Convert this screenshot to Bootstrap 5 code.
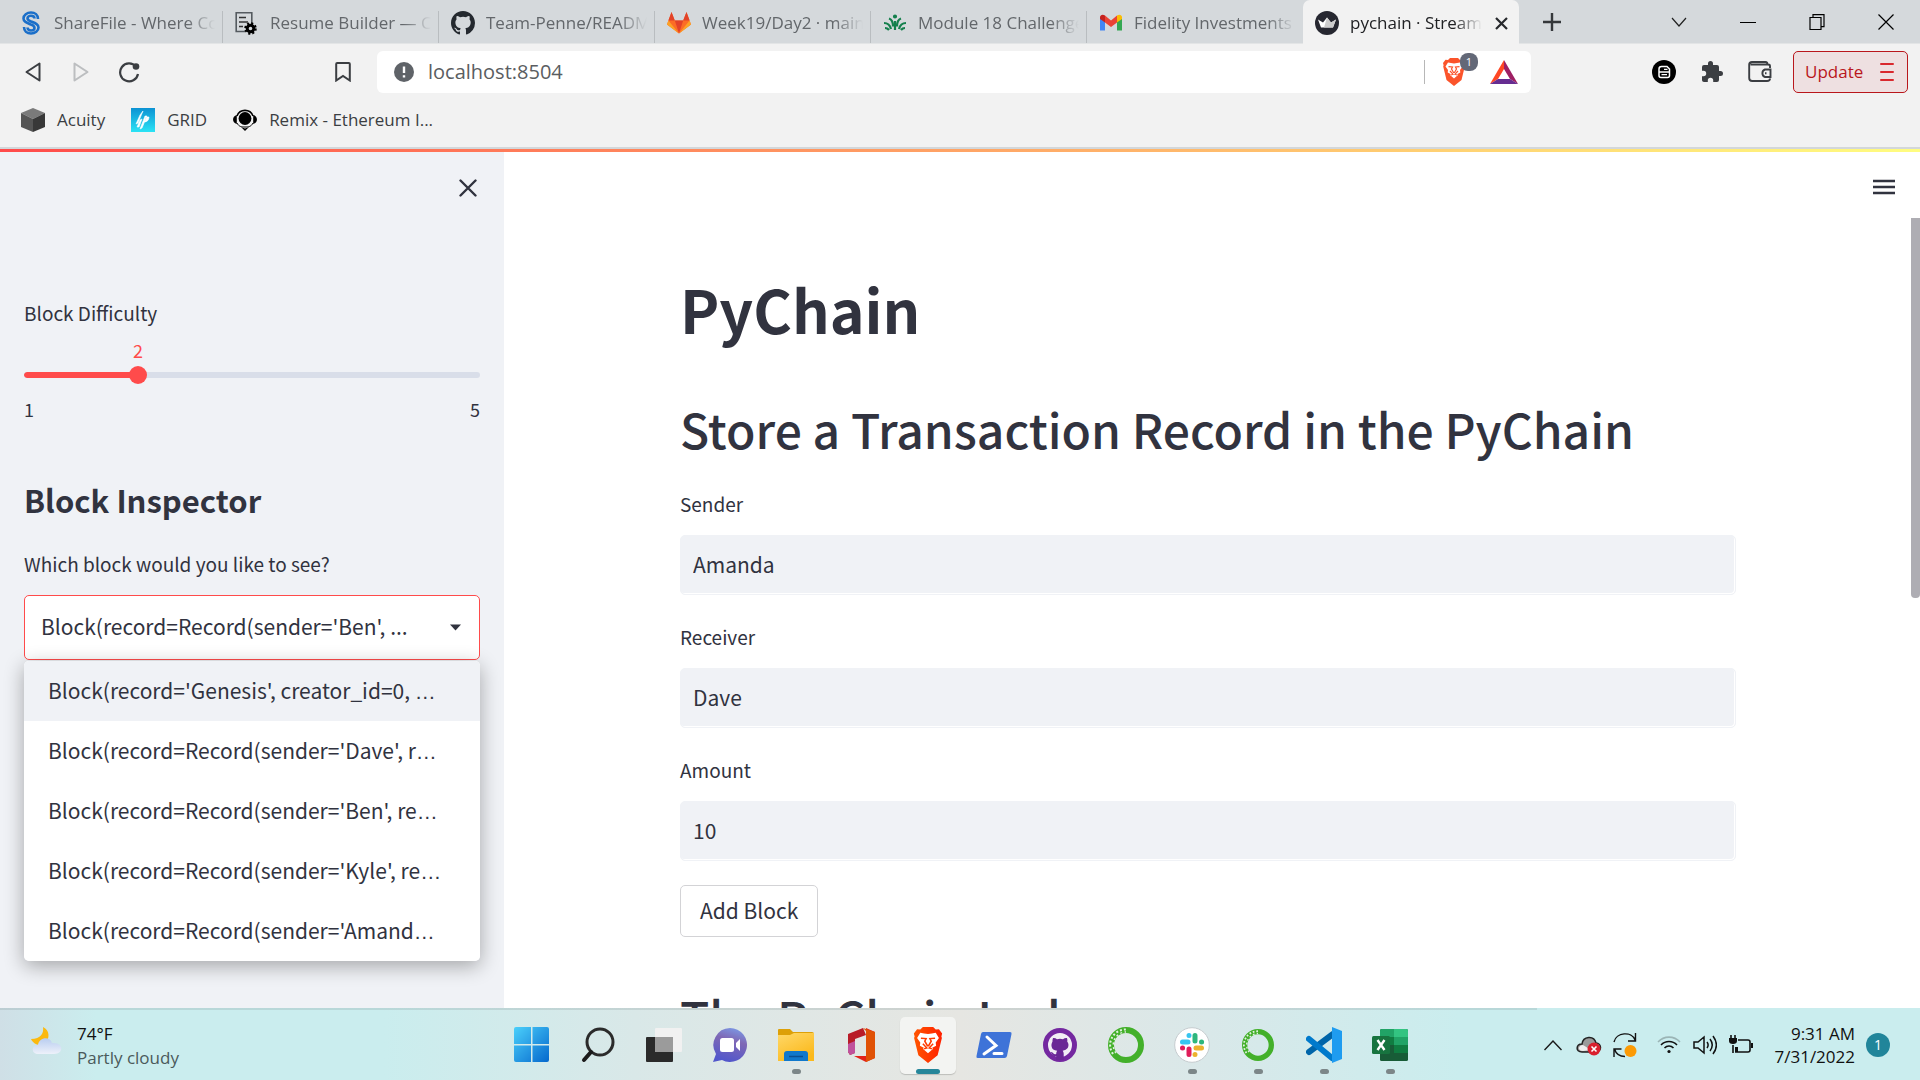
<!DOCTYPE html>
<html lang="en">
<head>
<meta charset="utf-8">
<meta name="viewport" content="width=device-width, initial-scale=1">
<title>pychain · Streamlit</title>
<link href="https://cdn.jsdelivr.net/npm/bootstrap@5.3.0/dist/css/bootstrap.min.css" rel="stylesheet">
<style>
  :root { --ink: #31333f; --panel: #f0f2f6; --accent: #ff4b4b; --chrome: #f2f2f2; --strip: #d5d9dc; }
  body { font-family: "Open Sans", "Noto Sans", sans-serif; font-size: 17px; color: #3b3e42; }
  svg { display: block; flex: none; }
  button { color: inherit; }
  .plain { background: none; border: 0; padding: 0; display: flex; align-items: center; justify-content: center; flex: none; }

  /* tab strip */
  .tabstrip { height: 44px; background: var(--strip); padding-left: 7px; border-bottom: 1px solid #e3e5e6; }
  .tab { width: 216px; height: 43px; padding: 2px 8px 0 12px; gap: 11px; background: linear-gradient(#b9bdc0, #b9bdc0) right bottom / 1px 32px no-repeat; color: #63676b; font-size: 17px; line-height: 24px; text-decoration: none; }
  .tab.before-active { background: none; }
  .tab-on { height: 44px; background: var(--chrome); border-radius: 7px 7px 0 0; color: #202124; }
  .tab-title { overflow: hidden; white-space: nowrap; flex: 1; -webkit-mask-image: linear-gradient(90deg, #000 calc(100% - 28px), transparent); mask-image: linear-gradient(90deg, #000 calc(100% - 28px), transparent); }
  .new-tab { width: 66px; }
  .win-btn { width: 69px; color: #000; }

  /* toolbar and bookmarks */
  .toolbar { background: var(--chrome); height: 56px; padding: 7px 12px 7px 9px; }
  .nav-btn { width: 48px; height: 42px; }
  .mark-btn { width: 68px; margin-left: 156px; }
  .address { flex: 1; background: #fff; border-radius: 6px; height: 42px; padding: 0 13px 0 17px; }
  .address input { border: 0; outline: 0; background: none; font-size: 20px; line-height: 28px; color: #5a5d61; padding: 0; margin-left: 14px; min-width: 0; }
  .address .rule { width: 1px; height: 24px; background: #b7b7b7; margin-right: 17px; }
  .tools { margin-left: 109px; }
  .shield-count { position: absolute; left: 18px; top: -5px; width: 18px; height: 18px; border-radius: 8px; background: #636877; color: #fff; font-size: 11px; line-height: 18px; text-align: center; }
  .update { width: 115px; height: 42px; border: 1px solid #b9171c; border-radius: 5px; background: #eee0e1; color: #b9171c; font-size: 17px; padding: 0 13px 0 11px; margin-left: 9px; }
  .bookmarks { background: var(--chrome); height: 49px; padding: 5px 21px 12px; gap: 26px; border-bottom: 2px solid #d3d7da; font-size: 17px; }
  .bookmarks a { color: #3b3e42; text-decoration: none; gap: 12px; line-height: 24px; }

  /* application */
  .app { min-height: 0; font-family: "Noto Sans CJK SC", "Source Sans Pro", sans-serif; color: var(--ink); background: #fff; font-size: 21px; }
  .ribbon { position: absolute; top: 0; left: 0; right: 0; height: 3px; background: linear-gradient(90deg, #ff4b4b, #fffd80); z-index: 3; }
  .side { width: 504px; background: var(--panel); padding: 26px 24px 0; flex: none; }
  .side-close { width: 24px; height: 26px; color: var(--ink); }
  .field-label { font-size: 19px; line-height: 26px; margin: 0; display: block; }
  .slider-group { margin-top: 99px; }
  .slider-value { color: var(--accent); font-size: 18px; line-height: 26px; margin-top: 11px; }
  .slider-box { position: relative; height: 18px; margin-top: 3px; }
  .rail { height: 6px; background: #d9dee9; border-radius: 3px; width: 100%; }
  .rail .progress-bar { background: var(--accent); border-radius: 3px; }
  .slider-box input { position: absolute; left: -9px; top: 0; width: calc(100% + 18px); height: 18px; }
  .slider-box input::-webkit-slider-runnable-track { background: transparent; height: 18px; }
  .slider-box input::-webkit-slider-thumb { width: 18px; height: 18px; margin-top: 0; background: var(--accent); }
  .slider-ends { margin-top: 12px; font-size: 18px; line-height: 26px; }
  .side h2 { font-size: 31px; line-height: 36px; font-weight: 700; margin: 60px 0 33px; }
  .picker { position: relative; margin-top: 18px; }
  .picker select { width: 100%; height: 65px; border: 1px solid var(--accent); border-radius: 5px; background: #fff; color: var(--ink); font-size: 21px; padding: 0 48px 2px 16px; appearance: none; }
  .picker > svg { position: absolute; right: 19px; top: 29px; }
  .options { position: absolute; left: 0; right: 0; top: 66px; background: #fff; border-radius: 5px; overflow: hidden; z-index: 2; }
  .options-shadow { position: absolute; inset: 66px 0 auto 0; height: 300px; border-radius: 5px; box-shadow: 0 5px 20px rgba(0,0,0,.32); }
  .options button { display: block; width: 100%; height: 60px; border: 0; background: none; text-align: left; padding: 0 12px 2px 24px; color: var(--ink); font-size: 21px; line-height: 30px; white-space: nowrap; }
  .options button.current { background: var(--panel); }
  .dots { font-family: "Liberation Sans", sans-serif; line-height: 1; }

  .main-pane { min-width: 0; overflow: hidden; position: relative; padding: 130px 8px 0 0; }
  .menu-btn { position: absolute; right: 24px; top: 26px; width: 24px; height: 24px; }
  .thumb { position: absolute; right: 0; top: 69px; width: 9px; height: 380px; border-radius: 0 0 4px 4px; background: #aeadb3; }
  .column { max-width: 1056px; margin: 0 auto; }
  .column h1 { font-size: 59px; line-height: 60px; font-weight: 700; margin: 0 0 62px; }
  .column h2 { font-size: 48px; line-height: 54px; font-weight: 500; margin: 0 0 36px; }
  .column h2.ledger { margin: 52px 0 0; }
  .field { margin-bottom: 29px; }
  .field:last-of-type { margin-bottom: 24px; }
  .field input { width: 100%; height: 60px; margin-top: 18px; border: 1px solid var(--panel); border-radius: 5px; background: var(--panel); box-shadow: inset -1px -1px #fff; color: var(--ink); font-size: 21px; padding: 0 12px 3px; display: block; }
  .add-btn { height: 52px; border: 1px solid #d3d3d6; border-radius: 5px; background: #fff; color: var(--ink); font-size: 21px; line-height: 30px; padding: 0 19px 3px; display: block; }

  /* taskbar */
  .taskbar { height: 72px; flex: none; border-top: 2px solid; border-image: linear-gradient(90deg, rgba(120,140,140,.22) 80%, transparent 80%) 1; font-size: 17px; color: #111; background: linear-gradient(90deg, #cfdfe6 0, #caedee 5%, #caedee 20%, #d9e8e8 33%, #e6e6e2 50%, #d9e8e9 63%, #caedee 76%, #caedee 100%); }
  .launcher { padding-left: 2px; }
  .wing { flex: 1 1 0; }
  .weather { padding: 12px 0 0 29px; gap: 14px; line-height: 24px; }
  .weather .sub { color: #4a5a5b; }
  .weather svg { margin-top: 5px; }
  .slot { width: 66px; height: 70px; position: relative; }
  .slot .tile { width: 56px; height: 57px; border-radius: 5px; }
  .slot.active .tile { background: #f3f4f2; box-shadow: 0 1px 1px rgba(0,0,0,.18); }
  .slot.open::after { content: ""; position: absolute; left: 29px; bottom: 6px; width: 9px; height: 5px; border-radius: 3px; background: #7c8688; }
  .slot.active::after { content: ""; position: absolute; left: 21px; bottom: 6px; width: 24px; height: 5px; border-radius: 3px; background: #26869a; }
  .tray { padding-right: 30px; }
  .clock { width: 84px; line-height: 23px; text-align: right; margin: 0 11px 0 12px; white-space: nowrap; }
  .notice { width: 24px; height: 24px; border-radius: 12px; background: #21859a; color: #fff; font-size: 14px; line-height: 24px; text-align: center; }
  .tray-btn { width: 36px; height: 40px; }
</style>
<script src="https://cdn.jsdelivr.net/npm/bootstrap@5.3.0/dist/js/bootstrap.bundle.min.js"></script>
</head>
<body class="vh-100 d-flex flex-column overflow-hidden">

<header class="flex-shrink-0">
  <nav class="tabstrip d-flex" aria-label="Browser tabs">
    <a class="tab d-flex align-items-center" href="#">
      <svg width="24" height="24" viewBox="0 0 24 24"><path d="M19 8c0-4-3-6.500-7-6.500S4.500 4 4.500 7.500 8 12 12 13.500c3 1 3.500 2 3.500 3.500s-1.500 2.500-3.500 2.500-3.500-1-3.500-3M5 16c0 4 3 6.500 7 6.500s7.500-2.500 7.500-6S16 12 12 10.500c-3-1-3.500-2-3.500-3.200S10 4.700 12 4.700s3.500 1 3.500 2.800" fill="none" stroke="#1b6fc9" stroke-width="2.600"/></svg>
      <span class="tab-title">ShareFile - Where Co</span></a>
    <a class="tab d-flex align-items-center" href="#">
      <svg width="24" height="24" viewBox="0 0 24 24"><path d="M10 20.500H1.200V1.800h15.600V12" fill="none" stroke="#555b60" stroke-width="1.600"/><path d="M4 6.500h7M4 11h9M4 15.500h4" stroke="#333" stroke-width="1.600"/><circle cx="15.500" cy="17.500" r="3.300" fill="none" stroke="#000" stroke-width="3"/><circle cx="15.500" cy="17.500" r="5" fill="none" stroke="#000" stroke-width="2.500" stroke-dasharray="2 1.930"/></svg>
      <span class="tab-title">Resume Builder — Co</span></a>
    <a class="tab d-flex align-items-center" href="#">
      <svg width="24" height="24" viewBox="0 0 16 16"><path fill="#24292f" d="M8 0C3.580 0 0 3.580 0 8c0 3.540 2.290 6.530 5.470 7.590.4.070.55-.17.55-.38 0-.19-.01-.82-.01-1.490-2.010.37-2.530-.49-2.690-.94-.09-.23-.48-.94-.82-1.130-.28-.15-.68-.52-.01-.53.63-.01 1.080.58 1.230.82.72 1.210 1.870.87 2.330.66.070-.52.28-.87.51-1.070-1.780-.2-3.640-.89-3.640-3.950 0-.87.31-1.590.82-2.150-.08-.2-.36-1.020.08-2.120 0 0 .67-.21 2.200.82a7.600 7.600 0 0 1 4 0c1.530-1.040 2.200-.82 2.200-.82.44 1.100.16 1.920.08 2.120.51.56.82 1.270.82 2.150 0 3.070-1.870 3.750-3.650 3.950.29.25.54.73.54 1.480 0 1.070-.01 1.930-.01 2.200 0 .21.15.46.55.38A8 8 0 0 0 16 8c0-4.420-3.580-8-8-8z"/></svg>
      <span class="tab-title">Team-Penne/README</span></a>
    <a class="tab d-flex align-items-center" href="#">
      <svg width="24" height="24" viewBox="0 0 24 24"><path d="M0 13.500 4.500 1l3.300 8.500h8.400L19.500 1 24 13.500 12 22.500z" fill="#fc6d26"/><path d="M4.500 1 7.800 9.500H1.400zM19.500 1l3.100 8.500h-6.400zM7.800 9.500h8.400L12 22.500z" fill="#e24329"/><path d="M1.400 9.500 0 13.500l12 9zM22.600 9.500l1.400 4-12 9z" fill="#fca326"/></svg>
      <span class="tab-title">Week19/Day2 · main</span></a>
    <a class="tab d-flex align-items-center" href="#">
      <svg width="24" height="24" viewBox="0 0 24 24" fill="none" stroke="#15804d" stroke-width="2.200"><circle cx="12" cy="5.500" r="1" /><path d="M12 10v9M6 7.500c3 1 4 3.500 4 8M18 7.500c-3 1-4 3.500-4 8M1 12c4 0 6 2 7 6M23 12c-4 0-6 2-7 6M2 17c2 0 3 .7 4 2M22 17c-2 0-3 .7-4 2"/></svg>
      <span class="tab-title">Module 18 Challenge</span></a>
    <a class="tab before-active d-flex align-items-center" href="#">
      <svg width="24" height="24" viewBox="0 0 24 24"><path d="M1 6v13.500h5V10z" fill="#4285f4"/><path d="M18 10v9.500h5V6z" fill="#34a853"/><path d="M1 6.500c0-3 3-3.500 5-2v7L1 8z" fill="#c5221f"/><path d="M6 4.500 12 9.500l6-5v7L12 16l-6-4.500z" fill="#ea4335"/><path d="M23 6.500c0-3-3-3.500-5-2v7L23 8z" fill="#fbbc04"/></svg>
      <span class="tab-title">Fidelity Investments</span></a>
    <a class="tab tab-on d-flex align-items-center" href="#" aria-current="page">
      <svg width="24" height="24" viewBox="0 0 24 24"><circle cx="12" cy="12" r="12" fill="#262730"/><path d="m3 8.500 5 3 4-5 4 5 5-3-3 8H6z" fill="#fff"/><path d="m12 6.500 4 5 5-3-3 8H9z" fill="#ccc"/></svg>
      <span class="tab-title">pychain · Streamlit</span>
      <svg width="18" height="18" viewBox="0 0 18 18"><path d="m3 4 11 11M14 4 3 15" stroke="#27292c" stroke-width="2.200"/></svg></a>
    <button class="plain new-tab" aria-label="New tab"><svg width="20" height="20" viewBox="0 0 20 20"><path d="M10 1v18M1 10h18" stroke="#35383b" stroke-width="2.400"/></svg></button>
    <div class="ms-auto d-flex">
      <button class="plain win-btn" aria-label="Search tabs"><svg width="18" height="18" viewBox="0 0 18 18"><path d="m2 5 7 8 7-8" fill="none" stroke="#222" stroke-width="1.200"/></svg></button>
      <button class="plain win-btn" aria-label="Minimize"><svg width="16" height="16"><path d="M0 8.500h16" stroke="#000"/></svg></button>
      <button class="plain win-btn" aria-label="Restore"><svg width="16" height="16" viewBox="0 0 16 16" fill="none" stroke="#000" stroke-width="1.200"><path d="M1 3.500h11v12H1zM4 3.500V.6h11v12h-3"/></svg></button>
      <button class="plain win-btn" aria-label="Close"><svg width="16" height="16"><path d="m.5.5 15 15M15.500.5l-15 15" stroke="#000" stroke-width="1.200"/></svg></button>
    </div>
  </nav>

  <div class="toolbar d-flex align-items-center">
    <button class="plain nav-btn" aria-label="Back"><svg width="18" height="22" viewBox="0 0 18 22"><path d="M15.500 2.500v17L2.500 11z" fill="none" stroke="#3b3e42" stroke-width="2" stroke-linejoin="round"/></svg></button>
    <button class="plain nav-btn" aria-label="Forward" disabled><svg width="18" height="22" viewBox="0 0 18 22"><path d="M2.500 2.500v17L15.500 11z" fill="none" stroke="#bcbec0" stroke-width="2" stroke-linejoin="round"/></svg></button>
    <button class="plain nav-btn" aria-label="Reload"><svg width="22" height="22" viewBox="0 0 22 22"><path d="M18 5.500A9 9 0 1 0 20 13" fill="none" stroke="#3b3e42" stroke-width="2.200"/><circle cx="18" cy="5.500" r="3.300" fill="#3b3e42"/></svg></button>
    <button class="plain nav-btn mark-btn" aria-label="Bookmark this page"><svg width="16" height="20" viewBox="0 0 16 20"><path d="M1.200 2c0-.6.4-1 1-1h11.600c.6 0 1 .4 1 1v16.500L8 14l-6.800 4.500z" fill="none" stroke="#3b3e42" stroke-width="2"/></svg></button>
    <div class="address d-flex align-items-center">
      <svg width="20" height="20" viewBox="0 0 20 20"><circle cx="10" cy="10" r="10" fill="#5f6368"/><path d="M10 4.500v6.500M10 13.200v2.300" stroke="#fff" stroke-width="2.400"/></svg>
      <input class="flex-grow-1" type="text" value="localhost:8504" aria-label="Address">
      <span class="rule"></span>
      <button class="plain position-relative" aria-label="Brave Shields"><svg width="24" height="28" viewBox="0 0 24 28"><path d="M6 2 8 0h8l2 2 2.500-.3L23 5l-.6 2.300.4 1.200-3.300 13.500L12 28 4.500 22 1.200 8.500l.4-1.200L1 5l2.500-3.300z" fill="#fb542b"/><path d="m9 5 3 .5L15 5l3-.5 2.500 4L18 12l.3 2.500-3.300 1.800 1 .7-4 3.500L8 17l1-.7-3.300-1.800L6 12 3.500 8.500l2.500-4z" fill="#fff"/><path d="m6.500 8.700 4 .3-1 2 2 3.500h1l2-3.500-1-2 4-.3M8 13l3 3.200L9 17M16 13l-3 3.200 2 .8" stroke="#fb542b" stroke-width="1.200" fill="none"/></svg><span class="shield-count">1</span></button>
      <button class="plain ms-4" aria-label="Brave Rewards"><svg width="28" height="24" viewBox="0 0 28 24"><path d="M14 0 0 24l8-5 6-10z" fill="#ff4724"/><path d="m14 0 14 24-8-5-6-10z" fill="#9e1f63"/><path d="M0 24h28l-8-5H8z" fill="#662d91"/></svg></button>
    </div>
    <div class="tools d-flex align-items-center">
      <button class="plain nav-btn" aria-label="Extension"><svg width="24" height="24" viewBox="0 0 24 24"><circle cx="12" cy="12" r="12" fill="#000"/><path d="M7 9q0-2.500 2.500-2.500H15L17.500 9v6.500q0 2-2 2H9q-2 0-2-2z" fill="none" stroke="#fff" stroke-width="1.500"/><path d="M7 12h10.500M12 9.300h3.500M9.500 14.700h5.500" stroke="#fff" stroke-width="1.300" fill="none"/></svg></button>
      <button class="plain nav-btn" aria-label="Extensions"><svg width="24" height="24" viewBox="0 0 24 24"><path d="M20.500 11H19V7a2 2 0 0 0-2-2h-4V3.500a2.500 2.500 0 0 0-5 0V5H4a2 2 0 0 0-2 2v3.800h1.500a2.700 2.700 0 0 1 0 5.400H2V20c0 1.100.9 2 2 2h3.800v-1.500a2.700 2.700 0 0 1 5.400 0V22H17a2 2 0 0 0 2-2v-4h1.500a2.500 2.500 0 0 0 0-5z" fill="#3b3e42"/></svg></button>
      <button class="plain nav-btn" aria-label="Wallet"><svg width="24" height="22" viewBox="0 0 24 22" fill="none" stroke="#3b3e42" stroke-width="1.900"><path d="M22 7V5c0-1-1-1.500-2-1.500H2.500M19.500 3c0-1-.5-2-2-2H4C2 1 1.200 2 1.200 3.500V17c0 2 1 3 3 3H19c2 0 3-1 3-2.500"/><path d="M22.500 8.500H17a4 4 0 0 0 0 7.500h5.500zM17 12.200h1.500"/></svg></button>
      <button class="update d-flex align-items-center justify-content-between">Update <svg width="14" height="20" viewBox="0 0 14 20"><path d="M1 2h12M1 10h12M1 18h12" stroke="#d9292e" stroke-width="2" stroke-linecap="round"/></svg></button>
    </div>
  </div>

  <nav class="bookmarks d-flex align-items-center" aria-label="Bookmarks">
    <a class="d-flex align-items-center" href="#"><svg width="24" height="24" viewBox="0 0 24 24"><path d="m12 0 12 5-12 6L0 5z" fill="#7a7a7a"/><path d="m0 5 12 6v13L0 19z" fill="#555"/><path d="m24 5-12 6v13l12-5z" fill="#383838"/></svg>Acuity</a>
    <a class="d-flex align-items-center" href="#"><svg width="24" height="24" viewBox="0 0 24 24"><defs><linearGradient id="gr" x2="0" y2="1"><stop stop-color="#0c92d3"/><stop offset="1" stop-color="#2be3f5"/></linearGradient></defs><path d="M0 0h24v24H0z" fill="url(#gr)"/><path d="m9 7-4 9 2-1 5-12zM9 12l-3 7 2 0 3-8zM14 8l-5 13 2-1 5-12zM15 9h3c0 3-2 5-4.500 5z" fill="#fff" stroke="#fff" stroke-width=".6"/></svg>GRID</a>
    <a class="d-flex align-items-center" href="#"><svg width="24" height="24" viewBox="0 0 24 24"><path d="M4 8a8.500 8.500 0 0 1 16 0" fill="none" stroke="#000" stroke-width="1.600"/><circle cx="12" cy="10.500" r="6.400"/><path d="M3.800 7v9c-5-1-5-8 0-9zM20.200 7v9c5-1 5-8 0-9zM8 19l4 1.500 4-1.500-4 4z"/><path d="M4 15c2 4 5 4 8 4s6 0 8-4" fill="none" stroke="#000"/></svg>Remix - Ethereum I...</a>
  </nav>
</header>

<div class="app d-flex flex-grow-1 position-relative">
  <div class="ribbon"></div>
  <aside class="side">
    <div class="d-flex justify-content-end"><button class="plain side-close" aria-label="Close sidebar"><svg width="18" height="18" viewBox="0 0 18 18"><path d="m1.500 1.500 15 15M16.500 1.500l-15 15" stroke="currentColor" stroke-width="2.400" stroke-linecap="round"/></svg></button></div>
    <div class="slider-group">
      <label class="field-label" for="difficulty">Block Difficulty</label>
      <div class="slider-value w-50 text-center">2</div>
      <div class="slider-box d-flex align-items-center">
        <div class="progress rail"><div class="progress-bar" style="width:25%"></div></div>
        <input class="form-range" id="difficulty" type="range" min="1" max="5" value="2">
      </div>
      <div class="slider-ends d-flex justify-content-between"><span>1</span><span>5</span></div>
    </div>
    <h2>Block Inspector</h2>
    <label class="field-label" for="block">Which block would you like to see?</label>
    <div class="picker">
      <select id="block"><option>Block(record=Record(sender='Ben', ...</option></select>
      <svg width="11" height="7" viewBox="0 0 11 7"><path d="M0 .5h11L5.500 6.500z" fill="#31333f"/></svg>
      <div class="options-shadow"></div>
      <div class="options" role="listbox" aria-label="Blocks">
        <button class="current" role="option">Block(record='Genesis', creator_id=0, <span class="dots">…</span></button>
        <button role="option">Block(record=Record(sender='Dave', r<span class="dots">…</span></button>
        <button role="option">Block(record=Record(sender='Ben', re<span class="dots">…</span></button>
        <button role="option">Block(record=Record(sender='Kyle', re<span class="dots">…</span></button>
        <button role="option">Block(record=Record(sender='Amand<span class="dots">…</span></button>
      </div>
    </div>
  </aside>

  <main class="main-pane flex-grow-1">
    <button class="plain menu-btn" aria-label="Menu"><svg width="24" height="16" viewBox="0 0 24 16"><path d="M1 2h22M1 8h22M1 14h22" stroke="#31333f" stroke-width="2.400"/></svg></button>
    <div class="thumb"></div>
    <div class="column">
      <h1>PyChain</h1>
      <h2>Store a Transaction Record in the PyChain</h2>
      <div class="field"><label class="field-label" for="sender">Sender</label><input id="sender" type="text" value="Amanda"></div>
      <div class="field"><label class="field-label" for="receiver">Receiver</label><input id="receiver" type="text" value="Dave"></div>
      <div class="field"><label class="field-label" for="amount">Amount</label><input id="amount" type="text" value="10"></div>
      <button class="add-btn">Add Block</button>
      <h2 class="ledger">The PyChain Ledger</h2>
    </div>
  </main>
</div>

<footer class="taskbar d-flex">
  <div class="wing weather d-flex">
    <svg width="34" height="30" viewBox="0 0 34 30"><defs><linearGradient id="cl" x2="0" y2="1"><stop stop-color="#b9cdf0"/><stop offset="1" stop-color="#edf1fa"/></linearGradient></defs><path d="M14 0c1 6-2 12-12 12 2 5 9 8 14 4s5-13-2-16z" fill="#fbb90f"/><path d="M9 27c-7 0-7-9 0-9 1-8 12-9 14-2 12-1 12 11 2 11z" fill="url(#cl)"/></svg>
    <div><div>74°F</div><div class="sub">Partly cloudy</div></div>
  </div>
  <nav class="launcher d-flex" aria-label="Taskbar">
    <button class="plain slot" aria-label="Start"><span class="tile plain"><svg width="36" height="36" viewBox="0 0 36 36"><defs><linearGradient id="wn" x2="1" y2="1"><stop stop-color="#4bd0fb"/><stop offset="1" stop-color="#0568cd"/></linearGradient></defs><path d="M0 2q0-2 2-2h15v17H0zM18.500 0H33q2 0 2 2v15H18.500zM0 18.500h17V35H2q-2 0-2-2zM18.500 18.500H35V33q0 2-2 2H18.500z" fill="url(#wn)"/></svg></span></button>
    <button class="plain slot" aria-label="Search"><span class="tile plain"><svg width="34" height="36" viewBox="0 0 34 36"><circle cx="19" cy="15" r="13" fill="none" stroke="#2b2b2b" stroke-width="3"/><path d="m10 25-7 8" stroke="#1b1b1b" stroke-width="4" stroke-linecap="round"/></svg></span></button>
    <button class="plain slot" aria-label="Task view"><span class="tile plain"><svg width="36" height="36" viewBox="0 0 36 36"><rect y="10" width="27" height="25" rx="1" fill="#2a2a2a"/><rect x="9" y="1" width="27" height="24" rx="1" fill="#f1f1f1"/><path d="M9 10h18v15H9z" fill="#9b9b9b"/></svg></span></button>
    <button class="plain slot" aria-label="Chat"><span class="tile plain"><svg width="36" height="36" viewBox="0 0 36 36"><defs><linearGradient id="ch" x1=".8" y1="0" x2=".5" y2="1"><stop stop-color="#7b9be8"/><stop offset=".4" stop-color="#7f68b5"/><stop offset="1" stop-color="#5257cb"/></linearGradient></defs><path d="M18 1a17 17 0 1 1-8 32l-9 2 3-8A17 17 0 0 1 18 1z" fill="url(#ch)"/><rect x="8" y="11" width="14" height="14" rx="2.500" fill="#fff"/><path d="m24 16 4-4v12l-4-4z" fill="#fff"/></svg></span></button>
    <button class="plain slot open" aria-label="File Explorer"><span class="tile plain"><svg width="36" height="36" viewBox="0 0 36 36"><defs><linearGradient id="fo" x2=".6" y2="1"><stop stop-color="#ffd869"/><stop offset="1" stop-color="#fbb91c"/></linearGradient></defs><path d="M0 3q0-1 1-1h11l3 3h19q2 0 2 2v8H0z" fill="#dda008"/><path d="M0 8h12l4-2h20v28H0z" fill="url(#fo)"/><path d="M6 34V27q0-3 3-3h18q3 0 3 3v7z" fill="#1078cc"/><path d="M11 29.500h14" stroke="#0b4f91" stroke-width="1.500"/></svg></span></button>
    <button class="plain slot" aria-label="Office"><span class="tile plain"><svg width="28" height="36" viewBox="0 0 28 36"><path d="M15 1 0 7v18l2 3 5-2V12l11-4z" fill="#b81c28"/><path d="M0 17l7-3v12l-5 2-2-3z" fill="#c0529c"/><path d="M18 1 27 5v26l-9 4-12-6h12z" fill="#e2231a"/><path d="m15 1 12 4v26l-9 4V4z" fill="#e05206"/></svg></span></button>
    <button class="plain slot active" aria-label="Brave"><span class="tile plain"><svg width="32" height="36" viewBox="0 0 24 28"><defs><linearGradient id="br"><stop stop-color="#ff5500"/><stop offset="1" stop-color="#ff2000"/></linearGradient></defs><path d="M6 2 8 0h8l2 2 2.500-.3L23 5l-.6 2.300.4 1.200-3.300 13.500L12 28 4.500 22 1.200 8.500l.4-1.200L1 5l2.500-3.300z" fill="url(#br)"/><path d="m9 5 3 .5L15 5l3-.5 2.500 4L18 12l.3 2.500-3.300 1.800 1 .7-4 3.500L8 17l1-.7-3.300-1.800L6 12 3.500 8.500l2.500-4z" fill="#fff"/><path d="m6.500 8.700 4 .3-1 2 2 3.500h1l2-3.500-1-2 4-.3M8 13l3 3.200L9 17M16 13l-3 3.200 2 .8" stroke="#ff3a00" stroke-width="1.200" fill="none"/></svg></span></button>
    <button class="plain slot" aria-label="PowerShell"><span class="tile plain"><svg width="36" height="28" viewBox="0 0 36 28"><path d="M7 1h27q2 0 1.500 2L31 25q-.5 2-2.500 2H1.500Q0 27 .5 25L5 3q.5-2 2-2z" fill="#3e73d8"/><path d="m11 6 9 8.500L8 23M18 22.500h8" fill="none" stroke="#fff" stroke-width="3" stroke-linecap="round"/></svg></span></button>
    <button class="plain slot" aria-label="GitHub Desktop"><span class="tile plain"><svg width="34" height="34" viewBox="0 0 34 34"><circle cx="17" cy="17" r="14.500" fill="#f2edf5" stroke="#7428a0" stroke-width="5"/><path d="M10 10q2-.5 4 1.200a14 14 0 0 1 6 0Q22 9.500 24 10q.7 2 .2 3.500 2.300 3 .5 6.500-1.500 2.300-5 2.700 1 1.300 1 3V32h-7.500v-4c-4 .5-4-3-6-4 3-.5 3 3 6 2 0-1.300.3-2.500 1-3.300-3.500-.5-5-1.500-5.500-3.700-.5-2-.2-3.500.8-5.500Q9.300 12 10 10z" fill="#6a2795"/></svg></span></button>
    <button class="plain slot" aria-label="Anaconda"><span class="tile plain"><svg width="36" height="36" viewBox="0 0 36 36"><circle cx="18" cy="18" r="15" fill="none" stroke="#43b02a" stroke-width="6"/><path d="M5 27A15.500 15.500 0 0 1 18 2.500" fill="none" stroke="#e2f0e2" stroke-width="2" stroke-dasharray="2 2"/><path d="M8 26A13 13 0 0 1 18 5" fill="none" stroke="#e2f0e2" stroke-width="1.500" stroke-dasharray="2 2.500"/></svg></span></button>
    <button class="plain slot open" aria-label="Slack"><span class="tile plain"><svg width="36" height="36" viewBox="0 0 36 36"><circle cx="18" cy="18" r="17.300" fill="#fff" stroke="#c6cccf"/><g stroke-width="5" stroke-linecap="round" fill="none"><path d="M8.500 15H14M15 8.500v.1" stroke="#36c5f0"/><path d="M21 8.500V14M27.500 15h.1" stroke="#2eb67d"/><path d="M27.500 21H22M21 27.500v.1" stroke="#ecb22e"/><path d="M15 27.500V22M8.500 21h.1" stroke="#e01e5a"/></g></svg></span></button>
    <button class="plain slot open" aria-label="Anaconda Navigator"><span class="tile plain"><svg width="32" height="32" viewBox="0 0 36 36"><circle cx="18" cy="18" r="15" fill="none" stroke="#43b02a" stroke-width="6"/><path d="M5 27A15.500 15.500 0 0 1 18 2.500" fill="none" stroke="#e2f0e2" stroke-width="2" stroke-dasharray="2 2"/><path d="M8 26A13 13 0 0 1 18 5" fill="none" stroke="#e2f0e2" stroke-width="1.500" stroke-dasharray="2 2.500"/></svg></span></button>
    <button class="plain slot open" aria-label="Visual Studio Code"><span class="tile plain"><svg width="36" height="36" viewBox="0 0 36 36"><path d="m3 25 24-18" stroke="#0065a9" stroke-width="6" stroke-linecap="round"/><path d="m3 12 23 19" stroke="#007acc" stroke-width="6" stroke-linecap="round"/><path d="m26 0 10 4v28l-10 4V0z" fill="#1f9cf0"/></svg></span></button>
    <button class="plain slot open" aria-label="Excel"><span class="tile plain"><svg width="36" height="34" viewBox="0 0 36 34"><rect x="8" y="1" width="28" height="32" rx="1.500" fill="#185c37"/><path d="M8 9V2.500Q8 1 9.500 1H22v8z" fill="#21a366"/><path d="M22 1h12.500Q36 1 36 2.500V9H22z" fill="#33c481"/><path d="M8 9h14v8H8z" fill="#107c41"/><path d="M22 9h14v8H22z" fill="#21a366"/><path d="M22 17h14v8H22z" fill="#107c41"/><rect y="8" width="18" height="18" rx="1.500" fill="#17743f"/><path d="m5.500 12 7 10M12.500 12l-7 10" stroke="#fff" stroke-width="2.400"/></svg></span></button>
  </nav>
  <div class="wing tray d-flex align-items-center justify-content-end">
    <button class="plain tray-btn" aria-label="Show hidden icons"><svg width="18" height="11"><path d="m.5 10 8.500-9 8.500 9" fill="none" stroke="#1a1a1a" stroke-width="1.400"/></svg></button>
    <button class="plain tray-btn" aria-label="OneDrive"><svg width="26" height="24" viewBox="0 0 26 24"><path d="M6 19c-7 0-6-8 0-8 1-8 12-9 14-1 6 0 6 9 0 9z" fill="#9a9a9a" stroke="#222" stroke-width="1.500"/><path d="M7 18c-6 0-5-6 0-6l8 5z" fill="#eee"/><circle cx="18" cy="16" r="6.500" fill="#d9202e"/><path d="m15.500 13.500 5 5M20.500 13.500l-5 5" stroke="#fff" stroke-width="1.600"/></svg></button>
    <button class="plain tray-btn" aria-label="Updates"><svg width="24" height="26" viewBox="0 0 24 26"><path d="M1 10C3 0 19-1 22 8M22.500 1v8H15M12 24.500C7 24.500 3 22 1.500 17M1 25v-8h7.500" fill="none" stroke="#111" stroke-width="1.400"/><circle cx="17.500" cy="19" r="6" fill="#fb9a04"/></svg></button>
    <button class="plain tray-btn ms-2" aria-label="Wi-Fi"><svg width="24" height="18" viewBox="0 0 24 18" fill="none" stroke="#111" stroke-width="1.600"><path d="M1 6C7-.5 17-.5 23 6" stroke="#9bb5b6"/><path d="M4 9c4.500-4.700 11.500-4.700 16 0M7.500 12c2.500-2.700 6.500-2.700 9 0"/><circle cx="12" cy="15.500" r="1.600" fill="#111" stroke="none"/></svg></button>
    <button class="plain tray-btn" aria-label="Volume"><svg width="24" height="20" viewBox="0 0 24 20" fill="none" stroke="#111" stroke-width="1.500"><path d="M1 7h4l6-5v16l-6-5H1zM14 7c1.500 2 1.500 4 0 6M17 4c3 4 3 8 0 12M20 1c4.500 6 4.500 12 0 18"/></svg></button>
    <button class="plain tray-btn" aria-label="Battery"><svg width="25" height="20" viewBox="0 0 25 20" fill="none" stroke="#111" stroke-width="1.600"><path d="M9 5h10q2 0 2 2v8q0 2-2 2H6M4 10v8M2 0v4M6 0v4"/><path d="M0 3h8v3q0 3-4 3T0 6zM22 8h2v5h-2zM6 12h3v5H6z" fill="#111" stroke="none"/></svg></button>
    <div class="clock">9:31 AM<br>7/31/2022</div>
    <div class="notice">1</div>
  </div>
</footer>
</body>
</html>
